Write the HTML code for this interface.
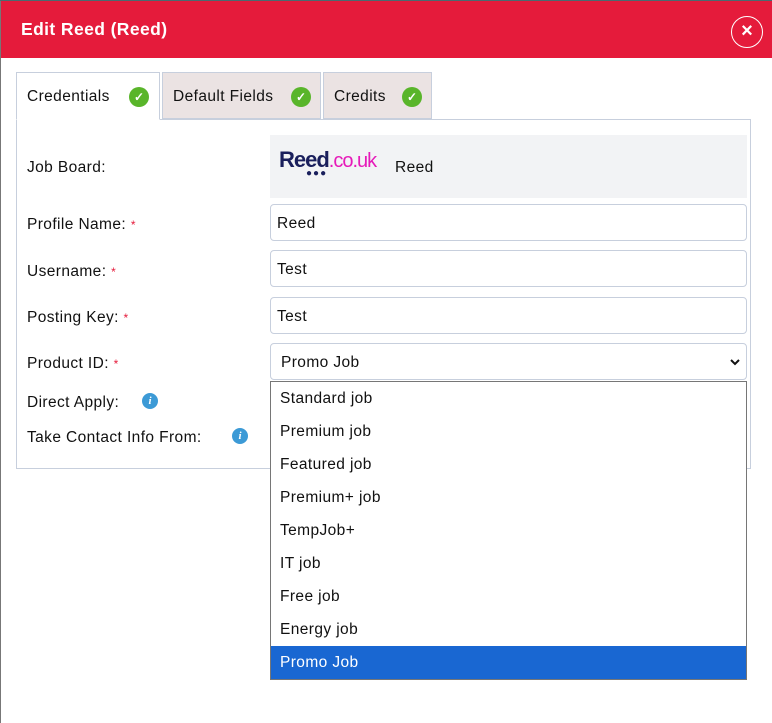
<!DOCTYPE html>
<html><head><style>
*{box-sizing:border-box;margin:0;padding:0}
body{width:772px;height:723px;position:relative;background:#fff;font-family:"Liberation Sans",sans-serif;font-size:15.5px;letter-spacing:0.4px;color:#111;overflow:hidden}
.a{position:absolute}
.edge{left:0;top:0;width:1px;height:723px;background:#777}
.top{left:0;top:0;width:772px;height:1px;background:#4a6a70}
.hdr{left:1px;top:1px;width:771px;height:57px;background:#e51b3b}
.ttl{left:21px;top:19px;color:#fff;font-weight:bold;font-size:17.5px}
.cls{left:731px;top:16px;width:32px;height:32px;border:1.5px solid #fff;border-radius:50%;color:#fff;font-weight:bold;font-size:20px;text-align:center;line-height:28px;letter-spacing:0}
.tab{top:72px;height:47px;border:1px solid #c7cfdd;background:#ebe3e3;padding:15px 10px 0}
.chk{position:absolute;top:14px;width:20px;height:20px;border-radius:50%;background:#59b52a;color:#fff;font-size:12px;font-weight:bold;text-align:center;line-height:20px;letter-spacing:0}
.panel{left:16px;top:119px;width:735px;height:350px;border:1px solid #c7cfdd}
.lbl{left:27px}
.req{color:#e51b3b;font-size:12px}
.inp{left:270px;width:477px;height:37px;border:1px solid #c7cfdd;border-radius:4px;padding:10px 6px 0}
.info{position:absolute;width:16px;height:16px;border-radius:50%;background:#3c9ad6;color:#fff;font-size:11px;font-weight:bold;font-style:italic;text-align:center;line-height:16px;font-family:"Liberation Serif",serif;letter-spacing:0}
.dd{left:270px;top:381px;width:477px;height:299px;border:1px solid #767676;background:#fff}
.dd div{height:33px;padding:8px 9px;font-size:15.5px}
</style></head><body>
<div class="a hdr"></div>
<div class="a edge"></div><div class="a top"></div>
<div class="a ttl">Edit Reed (Reed)</div>
<div class="a cls">×</div>
<div class="a panel"></div>
<div class="a tab" style="left:162px;width:159px">Default Fields<span class="chk" style="left:128px">✓</span></div>
<div class="a tab" style="left:323px;width:109px">Credits<span class="chk" style="left:78px">✓</span></div>
<div class="a tab" style="left:16px;width:144px;background:#fff;border-bottom:1px solid #fff;height:48px">Credentials<span class="chk" style="left:112px">✓</span></div>
<div class="a lbl" style="top:159px">Job Board:</div>
<div class="a" style="left:270px;top:135px;width:477px;height:63px;background:#f2f3f5"></div>
<div class="a" style="left:279px;top:147px;font-weight:bold;font-size:22px;color:#1a1f5c;letter-spacing:-1px">Reed<span style="color:#e61ab9;font-weight:normal;font-size:20px">.co.uk</span></div>
<div class="a" style="left:306px;top:168px;font-size:10px;color:#1a1f5c;letter-spacing:1px">●●●</div>
<div class="a" style="left:395px;top:159px">Reed</div>
<div class="a lbl" style="top:216px">Profile Name: <span class="req">*</span></div>
<div class="a inp" style="top:204px">Reed</div>
<div class="a lbl" style="top:263px">Username: <span class="req">*</span></div>
<div class="a inp" style="top:250px">Test</div>
<div class="a lbl" style="top:309px">Posting Key: <span class="req">*</span></div>
<div class="a inp" style="top:297px">Test</div>
<div class="a lbl" style="top:355px">Product ID: <span class="req">*</span></div>
<div class="a inp" style="top:343px;padding-left:10px">Promo Job<svg style="position:absolute;right:6px;top:15px" width="10" height="7" viewBox="0 0 10 7"><path d="M1 1l4 4 4-4" stroke="#111" stroke-width="2" fill="none"/></svg></div>
<div class="a lbl" style="top:394px">Direct Apply:</div>
<span class="info" style="left:142px;top:393px">i</span>
<div class="a lbl" style="top:429px">Take Contact Info From:</div>
<span class="info" style="left:232px;top:428px">i</span>
<div class="a dd">
<div>Standard job</div><div>Premium job</div><div>Featured job</div><div>Premium+ job</div><div>TempJob+</div><div>IT job</div><div>Free job</div><div>Energy job</div><div style="background:#1967d2;color:#fff">Promo Job</div>
</div>
</body></html>
